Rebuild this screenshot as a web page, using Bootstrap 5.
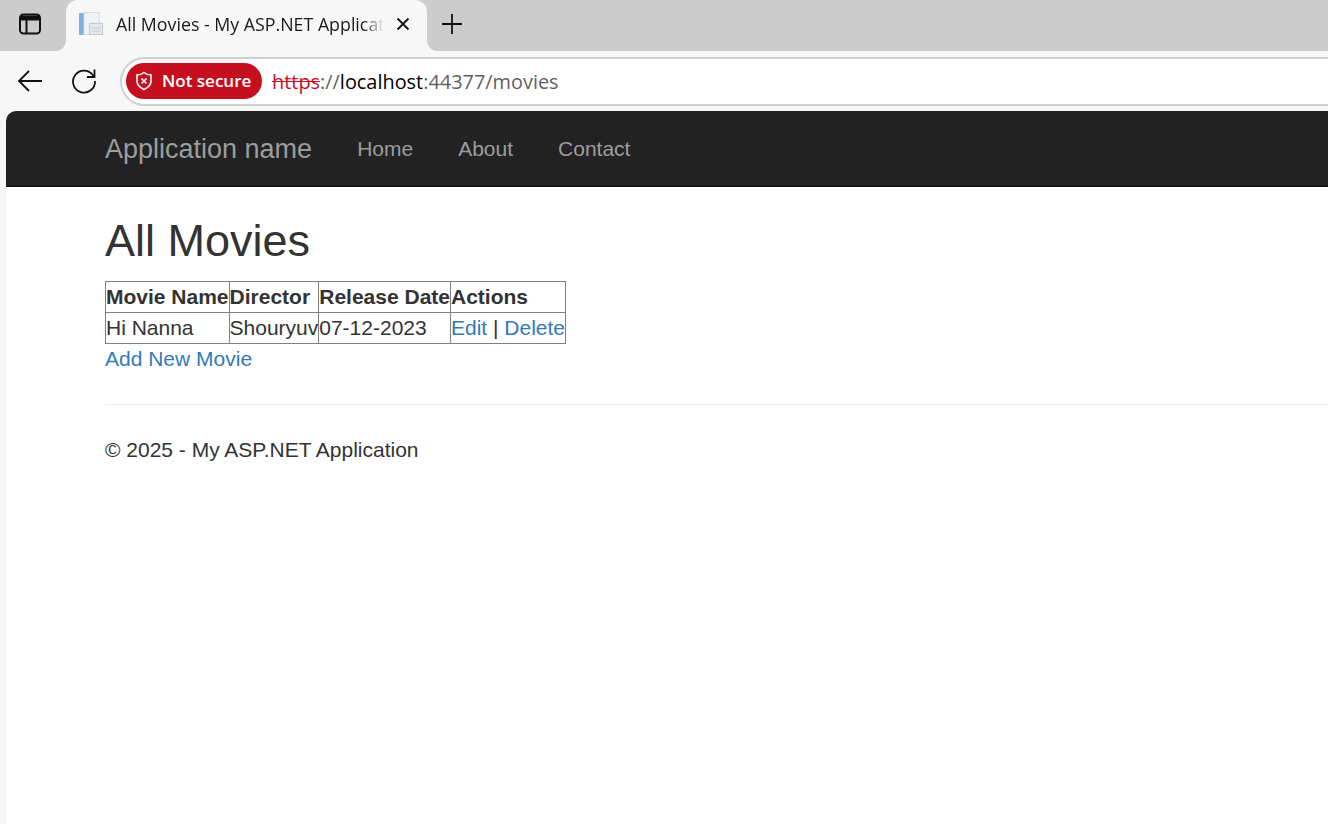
<!DOCTYPE html>
<html lang="en">
<head>
    <meta charset="UTF-8">
    <title>All Movies - My ASP.NET Application</title>
    <link href="https://cdn.jsdelivr.net/npm/bootstrap@5.3.2/dist/css/bootstrap.min.css" rel="stylesheet">
    <style>
        html, body {
            height: 100%;
            overflow: hidden;
        }
        body {
            background-color: #f7f7f7;
            font-family: "Liberation Sans", Arial, sans-serif;
            font-size: 21px;
            line-height: 30px;
            color: #333;
        }
        /* browser chrome */
        .tab-strip {
            height: 51px;
            background-color: #cccccc;
        }
        .tab-layout-btn {
            width: 60px;
            margin-right: 6px;
            margin-bottom: 4px;
        }
        .browser-tab {
            position: relative;
            width: 361px;
            height: 51px;
            background-color: #f7f7f7;
            border-radius: 12px 12px 0 0;
            padding: 0 16px 3px 12px;
            font-family: "Open Sans", sans-serif;
            font-size: 17.8px;
            color: #1a1a1a;
        }
        .browser-tab::before, .browser-tab::after {
            content: "";
            position: absolute;
            bottom: 0;
            width: 10px;
            height: 10px;
        }
        .browser-tab::before {
            left: -10px;
            background: radial-gradient(circle at 0 0, transparent 9.500px, #f7f7f7 10px);
        }
        .browser-tab::after {
            right: -10px;
            background: radial-gradient(circle at 100% 0, transparent 9.500px, #f7f7f7 10px);
        }
        .tab-title {
            width: 268px;
            margin-left: 12px;
            margin-right: 11px;
            overflow: hidden;
            white-space: nowrap;
            -webkit-mask-image: linear-gradient(to right, #000 92%, transparent);
            mask-image: linear-gradient(to right, #000 92%, transparent);
        }
        .tab-plus {
            margin-left: 14px;
            margin-bottom: 4px;
        }
        .tool-bar {
            height: 60px;
            padding-left: 15px;
        }
        .tool-btn {
            width: 30px;
            margin-right: 24px;
        }
        .address-box {
            flex-grow: 1;
            height: 49px;
            margin-left: -3px;
            padding-left: 4px;
            background-color: #fff;
            border: 2px solid #d0d0d0;
            border-right: 0;
            border-radius: 25px 0 0 25px;
            font-family: "Open Sans", sans-serif;
            font-size: 19.900px;
        }
        .not-secure {
            height: 36px;
            width: 136px;
            background-color: #c50f1f;
            color: #fff;
            border-radius: 18px;
            font-size: 17px;
            font-weight: 600;
            padding-left: 9px;
            gap: 9px;
        }
        .url-scheme {
            color: #c50f1f;
            text-decoration: line-through;
        }
        .url-dim {
            color: #5f5f5f;
        }
        .url-text {
            margin-left: 10px;
            padding-top: 1px;
        }
        /* page */
        .page-frame {
            margin-left: 6px;
            height: 713px;
            background-color: #fff;
            border-top-left-radius: 10px;
            overflow: hidden;
        }
        .site-nav {
            height: 76px;
            background-color: #222;
            border-bottom: 1px solid #080808;
            padding-left: 99px;
        }
        .site-brand {
            color: #9d9d9d;
            font-size: 27px;
            margin-right: 45px;
        }
        .site-link {
            color: #9d9d9d;
            margin-right: 45px;
        }
        .site-body {
            padding-left: 99px;
        }
        .page-title {
            font-family: inherit;
            font-size: 45px;
            font-weight: 400;
            line-height: 1.1;
            color: #333;
            margin: 29px 0 15px;
        }
        .movies-grid {
            border-collapse: collapse;
        }
        .movies-grid th, .movies-grid td {
            border: 1px solid #808080;
            padding: 0;
        }
        .movies-grid a, .add-link {
            color: #337ab7;
            text-decoration: none;
        }
        .add-link {
            display: block;
        }
        .site-rule {
            border: 0;
            border-top: 1px solid #eee;
            opacity: 1;
            margin: 30px 0;
        }
    </style>
</head>
<body>

<!-- Barra de pestañas -->
<div class="tab-strip d-flex align-items-center">
    <div class="tab-layout-btn d-flex justify-content-center">
        <svg width="24" height="24" viewBox="0 0 24 24" fill="none" stroke="#111" stroke-width="2">
            <rect x="2" y="2.5" width="20" height="19" rx="3.500"/>
            <path d="M2 7.500h20M8.500 7.500v14"/>
            <path d="M3 3.500h18v4H3z" fill="#111" stroke="none"/>
        </svg>
    </div>
    <div class="browser-tab d-flex align-items-center">
        <svg width="26" height="26" viewBox="0 0 26 26" class="flex-shrink-0">
            <rect x="1" y="2" width="5" height="22" fill="#7fb3de"/>
            <rect x="6" y="1.500" width="15" height="22" fill="#f1f2f4" stroke="#d8dade"/>
            <rect x="11.500" y="12.500" width="13" height="11" fill="#e6e9ed" stroke="#c6cad0"/>
            <path d="M13.500 17h9M13.500 20h9" stroke="#c3c8ce"/>
        </svg>
        <div class="tab-title">All Movies - My ASP.NET Applicat</div>
        <svg width="16" height="16" viewBox="0 0 16 16" class="flex-shrink-0" stroke="#111" stroke-width="1.800" fill="none">
            <path d="M2.500 2.500l11 11M13.500 2.500l-11 11"/>
        </svg>
    </div>
    <svg width="22" height="22" viewBox="0 0 22 22" class="tab-plus" stroke="#111" stroke-width="1.800" fill="none">
        <path d="M11 1v20M1 11h20"/>
    </svg>
</div>

<!-- Barra de dirección -->
<div class="tool-bar d-flex align-items-center">
    <div class="tool-btn d-flex justify-content-center">
        <svg width="26" height="24" viewBox="0 0 26 24" fill="none" stroke="#111" stroke-width="1.800">
            <path d="M25 12H2M12 2L2 12l10 10"/>
        </svg>
    </div>
    <div class="tool-btn d-flex justify-content-center">
        <svg width="26" height="26" viewBox="0 0 26 26" fill="none" stroke="#111" stroke-width="1.800">
            <path d="M22.500 8A11 11 0 1 0 24 13"/>
            <path d="M23.500 1.500V9H16"/>
        </svg>
    </div>
    <div class="address-box d-flex align-items-center">
        <div class="not-secure d-flex align-items-center">
            <svg width="18" height="20" viewBox="0 0 18 20" fill="none" stroke="#fff" stroke-width="1.600">
                <path d="M9 1.500c2 1.600 4.300 2.400 7 2.500v6c0 4-2.600 6.600-7 8.500-4.400-1.900-7-4.500-7-8.500V4c2.700-.1 5-.9 7-2.500z"/>
                <path d="M6.500 7.500l5 5M11.500 7.500l-5 5"/>
            </svg>
            <span>Not secure</span>
        </div>
        <div class="url-text"><span class="url-scheme">https</span><span class="url-dim">://</span><span class="text-black">localhost</span><span class="url-dim">:44377/movies</span></div>
    </div>
</div>

<!-- Página -->
<div class="page-frame">
    <nav class="site-nav d-flex align-items-center">
        <a class="site-brand text-decoration-none" href="#">Application name</a>
        <a class="site-link text-decoration-none" href="#">Home</a>
        <a class="site-link text-decoration-none" href="#">About</a>
        <a class="site-link text-decoration-none" href="#">Contact</a>
    </nav>
    <div class="site-body">
        <h2 class="page-title">All Movies</h2>
        <table class="movies-grid">
            <thead>
                <tr><th>Movie Name</th><th>Director</th><th>Release Date</th><th>Actions</th></tr>
            </thead>
            <tbody>
                <tr>
                    <td>Hi Nanna</td>
                    <td>Shouryuv</td>
                    <td>07-12-2023</td>
                    <td><a href="#">Edit</a> | <a href="#">Delete</a></td>
                </tr>
            </tbody>
        </table>
        <a class="add-link" href="#">Add New Movie</a>
        <hr class="site-rule">
        <footer>© 2025 - My ASP.NET Application</footer>
    </div>
</div>

</body>
</html>
